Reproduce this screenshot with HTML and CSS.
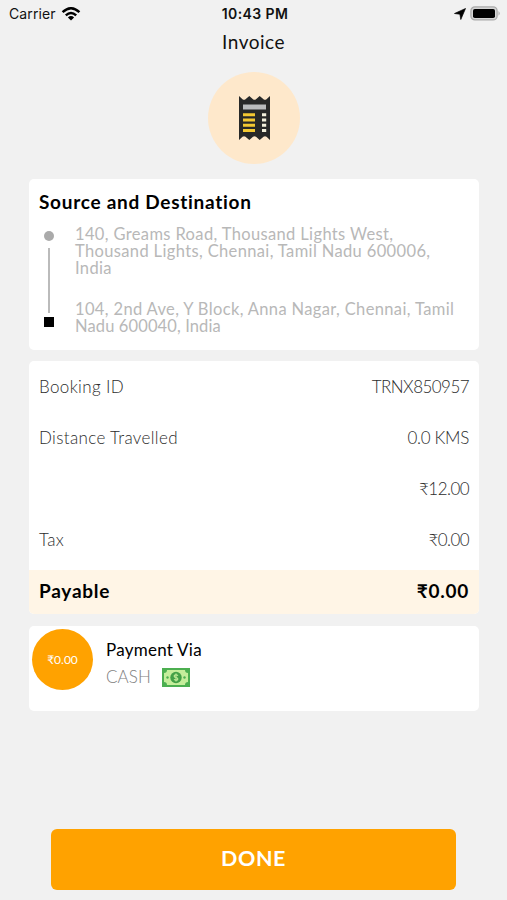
FILE: index.html
```html
<!DOCTYPE html>
<html lang="en">
<head>
<meta charset="utf-8">
<title>Invoice</title>
<link rel="stylesheet" href="styles.css">
</head>
<body>
<header class="status">
  <div class="status-left"><span>Carrier</span>
    <svg width="20" height="14" viewBox="0 0 20 14"><g fill="none" stroke="#000" stroke-width="2.500"><path d="M1.600 5.200Q10-2.600 18.400 5.200"/><path d="M4.800 8.400Q10 3.700 15.200 8.400"/></g><path d="M6.900 10.400Q10 7.800 13.100 10.400L10 13.500Z"/></svg>
  </div>
  <span class="time">10:43 PM</span>
  <div class="status-right">
    <svg width="12" height="12" viewBox="0 0 12 12"><path stroke="#000" stroke-width=".7" stroke-linejoin="round" d="M11.500.5 6.800 11.500 5.900 6.200.5 5.500Z"/></svg>
    <svg width="31" height="15" viewBox="0 0 31 15"><rect x=".9" y=".9" width="26.200" height="13" rx="4" fill="#d5d5d5" stroke="#aaa" stroke-width="1.300"/><rect x="3" y="3" width="22" height="9" rx="1.800"/><path d="M28.500 5Q31 7.400 28.500 9.800Z" fill="#aaa"/></svg>
  </div>
</header>
<h1 class="title">Invoice</h1>
<main class="content">
  <div class="badge">
    <svg width="31" height="44" viewBox="0 0 31 44"><path fill="#272828" d="M0 0 3.500 3.200Q5 4.200 6.500 3.200L10.300 0 14 3.200Q15.500 4.200 17 3.200L20.700 0 24.500 3.200Q26 4.200 27.500 3.200L31 0V44L27.500 40.800Q26 39.800 24.500 40.800L20.700 44 17 40.800Q15.500 39.800 14 40.800L10.300 44 6.500 40.800Q5 39.800 3.500 40.800L0 44Z"/><path fill="#b9bbbd" d="M4 8.500h23v5H4z"/><path fill="#f3c832" d="M4 17.200h12v3H4zM4 22.500h12v3H4zM4 27.700h12v3H4zM4 32.900h12v3H4z"/><path fill="#f2f0dc" d="M23 17.200h4.200v3H23zM23 22.500h4.200v3H23zM23 27.700h4.200v3H23zM23 32.900h4.200v3H23z"/></svg>
  </div>
  <section class="card route">
    <h2 class="heading">Source and Destination</h2>
    <div class="route-body">
      <div class="track"><i class="dot"></i><i class="line"></i><i class="square"></i></div>
      <div class="addresses">
        <p>140, Greams Road, Thousand Lights West,<br>Thousand Lights, Chennai, Tamil Nadu 600006,<br>India</p>
        <p>104, 2nd Ave, Y Block, Anna Nagar, Chennai, Tamil<br><span class="tight">Nadu 600040, India</span></p>
      </div>
    </div>
  </section>
  <section class="card fare">
    <div class="row"><span>Booking ID</span><span class="value">TRNX850957</span></div>
    <div class="row"><span>Distance Travelled</span><span class="value distance">0.0 KMS</span></div>
    <div class="row"><span></span><span class="value">₹12.00</span></div>
    <div class="row"><span>Tax</span><span class="value">₹0.00</span></div>
    <div class="row total"><span>Payable</span><span>₹0.00</span></div>
  </section>
  <section class="card payment">
    <div class="amount">₹0.00</div>
    <div class="method">
      <div class="via">Payment Via</div>
      <div class="cash"><span>CASH</span>
        <svg width="28" height="19" viewBox="0 0 28 19"><path fill="#4caf50" d="M0 0h28v19H0z"/><path fill="#c5ee9b" d="M5 2h18a3 3 0 0 0 3 3v9a3 3 0 0 0-3 3H5a3 3 0 0 0-3-3V5a3 3 0 0 0 3-3Z"/><circle cx="14" cy="9.500" r="5.700" fill="#43a047"/><circle cx="5.500" cy="9.500" r="1.200" fill="#4caf50"/><circle cx="22.500" cy="9.500" r="1.200" fill="#4caf50"/><path fill="none" stroke="#c5ee9b" stroke-width="1.100" d="M16 7.600Q15 6.700 14 6.700C11.500 6.700 11.500 9.200 14 9.500S16.500 12.300 14 12.300Q13 12.300 12 11.400M14 5.500v8"/></svg>
      </div>
    </div>
  </section>
</main>
<button class="done">DONE</button>
</body>
</html>
```
FILE: styles.css
```css
* { box-sizing: border-box; }
body { margin: 0; width: 507px; height: 900px; background: #f1f1f1; font-family: Lato, "Liberation Sans", sans-serif; font-variant-ligatures: none; color: #111; display: flex; flex-direction: column; overflow: hidden; }
h1, h2, p { margin: 0; }
svg { display: block; flex: none; }
.status { display: grid; grid-template-columns: 1fr auto 1fr; align-items: center; height: 27px; padding: 0 6px 0 9px; font-family: Inter, sans-serif; font-size: 14px; flex: none; }
.status-left { display: flex; gap: 5px; align-items: center; letter-spacing: 0.1px; }
.time { font-weight: 600; letter-spacing: 0.4px; }
.status-right { display: flex; justify-content: flex-end; align-items: center; gap: 4px; }
.title { text-align: center; font-size: 19px; font-weight: 400; line-height: 29px; letter-spacing: 0.5px; flex: none; }
.content { display: flex; flex-direction: column; padding: 16px 28px 0 29px; flex: none; }
.badge { width: 92px; height: 92px; border-radius: 50%; background: #fee8cb; align-self: center; display: flex; align-items: center; justify-content: center; margin-bottom: 15px; }
.card { background: #fff; border-radius: 5px; }
.route { height: 171px; padding: 10px; }
.heading { font-size: 19px; line-height: 25px; font-weight: 700; letter-spacing: 0.72px; color: #000; }
.route-body { display: flex; margin-top: 11px; }
.track { width: 20px; display: flex; flex-direction: column; align-items: center; padding-top: 6px; }
.dot { width: 10px; height: 10px; border-radius: 50%; background: #aaa; }
.line { width: 2px; height: 65px; background: #bbb; margin: 7px 0 4px; }
.square { width: 10px; height: 10px; background: #000; }
.addresses { padding: 1px 0 0 16px; font-size: 16.5px; line-height: 17.2px; letter-spacing: 0.36px; color: #b8b8b8; white-space: nowrap; }
.addresses p + p { margin-top: 23px; }
.tight { letter-spacing: 0.12px; }
.fare { margin-top: 11px; height: 253px; overflow: hidden; }
.row { height: 51px; padding: 0 10px; display: flex; justify-content: space-between; align-items: center; font-size: 17px; font-weight: 300; letter-spacing: 0.35px; color: #2c2c2c; }
.value { letter-spacing: -0.55px; }
.distance { letter-spacing: -0.3px; }
.total { height: 45px; margin-top: 5px; padding-bottom: 4px; background: #fff5e6; font-size: 19px; font-weight: 700; letter-spacing: 0.75px; color: #000; }
.payment { margin-top: 12px; height: 85px; display: flex; padding: 3px; }
.amount { width: 61px; height: 61px; border-radius: 50%; background: #ffa200; color: #fff; font-size: 12px; display: flex; align-items: center; justify-content: center; }
.method { padding: 9px 0 0 13px; }
.via { font-size: 17px; line-height: 24px; letter-spacing: 0.25px; color: #000; }
.cash { display: flex; align-items: center; gap: 11px; margin-top: 1px; font-size: 17px; line-height: 28px; color: #808080; font-weight: 300; letter-spacing: 0.1px; }
.done { margin: auto 51px 10px; height: 61px; flex: none; padding: 0 0 4px; border: 0; border-radius: 6px; background: #ffa200; color: #fff; font: 700 21.5px Lato, sans-serif; letter-spacing: 0.6px; }
```
